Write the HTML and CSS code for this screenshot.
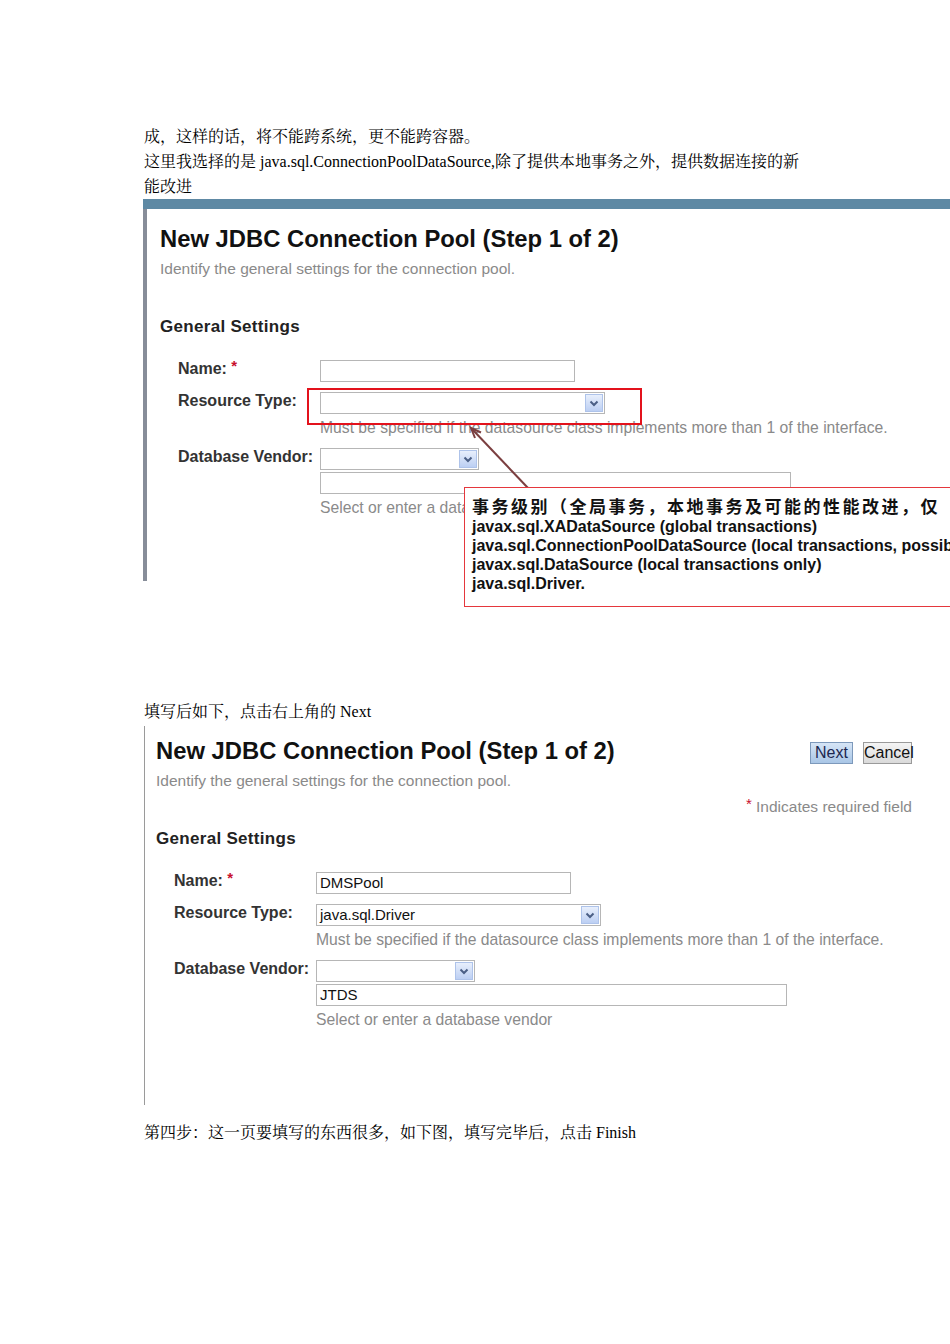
FILE: index.html
```html
<!DOCTYPE html>
<html lang="zh-CN">
<head>
  <meta charset="UTF-8" />
  <title>New JDBC Connection Pool</title>
  <meta name="viewport" content="width=device-width, initial-scale=1" />
  <link rel="stylesheet" href="styles.css">
</head>
<body>

  <div class="page">
    <p class="line">成，这样的话，将不能跨系统，更不能跨容器。</p>
    <p class="line">这里我选择的是 java.sql.ConnectionPoolDataSource,除了提供本地事务之外，提供数据连接的新</p>
    <p class="line">能改进</p>

    <!-- 截图 1 -->
    <div class="shot shot-one">
      <div class="shot-bar"></div>
      <div class="shot-body">
        <div class="pg-head">
          <div>
            <h1 class="pg-title">New JDBC Connection Pool (Step 1 of 2)</h1>
            <div class="pg-help">Identify the general settings for the connection pool.</div>
          </div>
        </div>
        <h2 class="sec-title">General Settings</h2>
        <div class="props">
          <div class="lbl">Name: <span class="req">*</span></div>
          <div class="ctl">
            <div class="field w-name"></div>
          </div>

          <div class="lbl">Resource Type:</div>
          <div class="ctl">
            <div class="field select w-type">
              <span></span>
              <span class="drop"><svg width="10" height="7" viewBox="0 0 10 7"><path d="M1.5 1.5 L5 5 L8.5 1.5" fill="none" stroke="#4b5f86" stroke-width="2"/></svg></span>
            </div>
            <div class="hint">Must be specified if the datasource class implements more than 1 of the interface.</div>
          </div>

          <div class="lbl">Database Vendor:</div>
          <div class="ctl">
            <div class="field select w-vendor">
              <span></span>
              <span class="drop"><svg width="10" height="7" viewBox="0 0 10 7"><path d="M1.5 1.5 L5 5 L8.5 1.5" fill="none" stroke="#4b5f86" stroke-width="2"/></svg></span>
            </div>
            <div class="field w-vendor-text"></div>
            <div class="hint">Select or enter a database vendor</div>
          </div>
        </div>
      </div>

      <!-- 标注 -->
      <div class="mark-box"></div>
      <svg class="mark-arrow" width="80" height="75" viewBox="0 0 80 75">
        <line x1="68" y1="67" x2="12" y2="8" stroke="#7b3f40" stroke-width="2"/>
        <polyline points="21,11.5 11,7 15,17" fill="none" stroke="#7b3f40" stroke-width="2"/>
      </svg>
      <div class="callout">
        <div class="callout-head">事务级别（全局事务，本地事务及可能的性能改进，仅</div>
        <div class="callout-line">javax.sql.XADataSource (global transactions)</div>
        <div class="callout-line">java.sql.ConnectionPoolDataSource (local transactions, possible performance improvements)</div>
        <div class="callout-line">javax.sql.DataSource (local transactions only)</div>
        <div class="callout-line">java.sql.Driver.</div>
      </div>
    </div>

    <p class="line after-shot">填写后如下，点击右上角的 Next</p>

    <!-- 截图 2 -->
    <div class="shot shot-two">
      <div class="pg-head">
        <div>
          <h1 class="pg-title">New JDBC Connection Pool (Step 1 of 2)</h1>
          <div class="pg-help">Identify the general settings for the connection pool.</div>
        </div>
        <div class="pg-actions">
          <div class="btns">
            <button class="btn btn-next">Next</button>
            <button class="btn btn-cancel">Cancel</button>
          </div>
          <div class="req-note"><span class="req">*</span> Indicates required field</div>
        </div>
      </div>
      <h2 class="sec-title">General Settings</h2>
      <div class="props">
        <div class="lbl">Name: <span class="req">*</span></div>
        <div class="ctl">
          <div class="field w-name">DMSPool</div>
        </div>

        <div class="lbl">Resource Type:</div>
        <div class="ctl">
          <div class="field select w-type">
            <span>java.sql.Driver</span>
            <span class="drop"><svg width="10" height="7" viewBox="0 0 10 7"><path d="M1.5 1.5 L5 5 L8.5 1.5" fill="none" stroke="#4b5f86" stroke-width="2"/></svg></span>
          </div>
          <div class="hint">Must be specified if the datasource class implements more than 1 of the interface.</div>
        </div>

        <div class="lbl">Database Vendor:</div>
        <div class="ctl">
          <div class="field select w-vendor">
            <span></span>
            <span class="drop"><svg width="10" height="7" viewBox="0 0 10 7"><path d="M1.5 1.5 L5 5 L8.5 1.5" fill="none" stroke="#4b5f86" stroke-width="2"/></svg></span>
          </div>
          <div class="field w-vendor-text">JTDS</div>
          <div class="hint">Select or enter a database vendor</div>
        </div>
      </div>
    </div>

    <p class="line after-two">第四步：这一页要填写的东西很多，如下图，填写完毕后，点击 Finish</p>
  </div>

</body>
</html>
```

FILE: styles.css
```css
body {
  margin: 0;
  background: #fff;
}

.page {
  width: 950px;
  overflow: hidden;
  box-sizing: border-box;
  padding: 124px 0 200px 144px;
  font-family: "Liberation Serif", "Noto Serif CJK SC", "Noto Sans CJK SC", serif;
  color: #000;
}

.line {
  margin: 0;
  font-size: 16px;
  line-height: 25px;
}

.after-shot {
  margin-top: 118px;
}

.after-two {
  margin-top: 15px;
}

/* 截图 */
.shot {
  position: relative;
  font-family: "Liberation Sans", Arial, sans-serif;
}

.shot-one {
  margin-left: -1px;
  width: 850px;
}

.shot-bar {
  height: 10px;
  background: #5e89a4;
}

.shot-one .shot-body {
  border-left: 4px solid #878d99;
  padding: 15px 0 63px 13px;
}

.shot-two {
  margin-top: 2px;
  width: 756px;
  border-left: 1px solid #9a9a9a;
  padding: 10px 11px 75px 11px;
}

.pg-head {
  display: flex;
  justify-content: space-between;
  min-height: 92px;
}

.pg-title {
  margin: 0;
  font-size: 23.8px;
  line-height: 30px;
  font-weight: bold;
  color: #111;
}

.pg-help {
  margin-top: 5px;
  font-size: 15.5px;
  line-height: 20px;
  color: #8a8a8a;
}

.pg-actions {
  display: flex;
  flex-direction: column;
  align-items: flex-end;
}

.btns {
  display: flex;
  gap: 10px;
  margin-top: 6px;
}

.btn {
  height: 22px;
  box-sizing: border-box;
  padding: 0;
  font-family: "Liberation Sans", Arial, sans-serif;
  font-size: 16px;
  line-height: 20px;
  border: 1px solid #8e8f8f;
}

.btn-next {
  width: 43px;
  background: linear-gradient(#d6e5f6, #a9c6e6);
  border-color: #7d99bb;
  color: #1c2750;
}

.btn-cancel {
  width: 49px;
  background: linear-gradient(#f4f4f4, #dadada);
  border-color: #9a9a9a;
  color: #111;
}

.req-note {
  margin-top: 33px;
  font-size: 15.5px;
  line-height: 20px;
  color: #8a8a8a;
}

.req {
  color: #c8102e;
  font-size: 15px;
  vertical-align: top;
  position: relative;
  top: -3px;
}

.sec-title {
  margin: 0;
  font-size: 17px;
  line-height: 22px;
  font-weight: bold;
  color: #222;
  letter-spacing: 0.3px;
}

.props {
  display: grid;
  grid-template-columns: 142px auto;
  justify-content: start;
  row-gap: 10px;
  margin: 22px 0 0 18px;
}

.lbl {
  font-size: 16px;
  line-height: 18px;
  font-weight: bold;
  color: #333;
}

.ctl {
  display: flex;
  flex-direction: column;
  align-items: flex-start;
}

.field {
  height: 22px;
  box-sizing: border-box;
  border: 1px solid #b6b6b6;
  background: #fff;
  padding: 0 3px;
  font-size: 15px;
  line-height: 20px;
  color: #111;
}

.field + .field {
  margin-top: 2px;
}

.select {
  display: flex;
  justify-content: space-between;
  padding-right: 1px;
}

.drop {
  width: 18px;
  height: 18px;
  margin-top: 1px;
  box-sizing: border-box;
  border: 1px solid #aec3ea;
  background: linear-gradient(#e8effc, #bccff3);
  display: flex;
  align-items: center;
  justify-content: center;
}

.w-name { width: 255px; }
.w-type { width: 285px; }
.w-vendor { width: 159px; }
.w-vendor-text { width: 471px; }

.hint {
  margin-top: 4px;
  font-size: 15.7px;
  line-height: 20px;
  color: #8a8a8a;
  white-space: nowrap;
}

/* 标注 */
.mark-box {
  position: absolute;
  left: 164px;
  top: 189px;
  width: 335px;
  height: 37px;
  box-sizing: border-box;
  border: 2px solid #e3121c;
}

.mark-arrow {
  position: absolute;
  left: 317px;
  top: 222px;
}

.callout {
  position: absolute;
  left: 321px;
  top: 288px;
  width: 620px;
  border: 1px solid #e5373d;
  background: #fff;
  padding: 7px 0 13px 7px;
  color: #111;
}

.callout-head {
  font-family: "Noto Sans CJK SC", sans-serif;
  font-weight: bold;
  font-size: 17px;
  line-height: 22px;
  letter-spacing: 2.5px;
  white-space: nowrap;
}

.callout-line {
  font-family: "Liberation Sans", Arial, sans-serif;
  font-weight: bold;
  font-size: 16px;
  line-height: 19px;
  white-space: nowrap;
}
```
